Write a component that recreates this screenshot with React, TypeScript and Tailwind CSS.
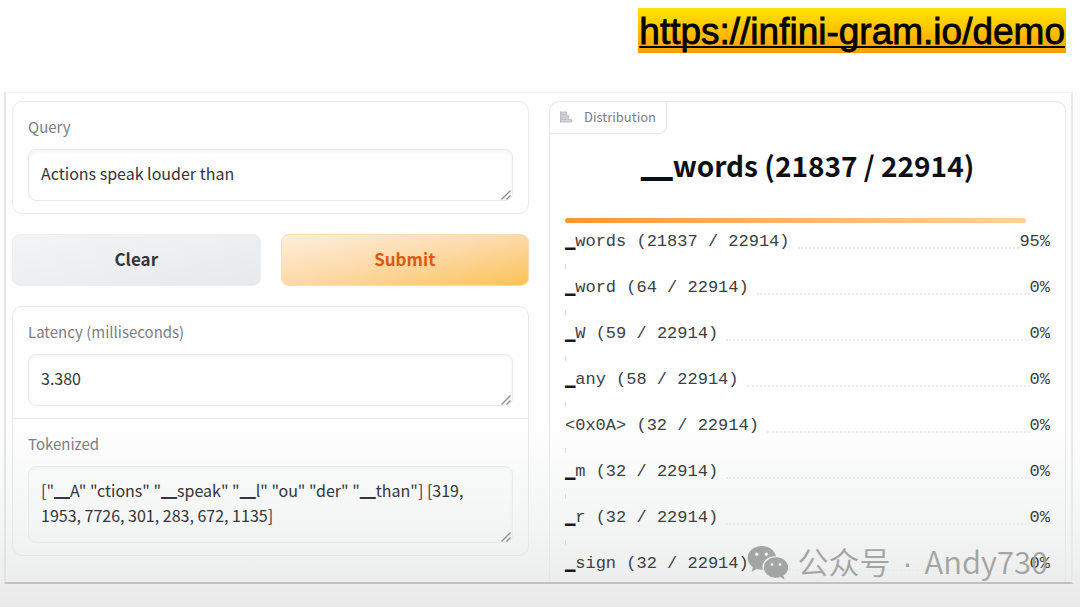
import React from "react";

type Row = { token: string; block?: boolean; count: number; percent: number };

const TOTAL = 22914;

const rows: Row[] = [
  { token: "words", block: true, count: 21837, percent: 95 },
  { token: "word", block: true, count: 64, percent: 0 },
  { token: "W", block: true, count: 59, percent: 0 },
  { token: "any", block: true, count: 58, percent: 0 },
  { token: "<0x0A>", count: 32, percent: 0 },
  { token: "m", block: true, count: 32, percent: 0 },
  { token: "r", block: true, count: 32, percent: 0 },
  { token: "sign", block: true, count: 32, percent: 0 },
];

function Grip() {
  return (
    <svg
      viewBox="0 0 10 10"
      className="pointer-events-none absolute right-[2px] bottom-[1px] h-[10px] w-[10px]"
      fill="none"
      stroke="#8d9092"
      strokeWidth="1.3"
      aria-hidden="true"
    >
      <path d="M0.500 9.500L9.500 0.500M5.500 9.500L9.500 5.500" />
    </svg>
  );
}

function Field({ id, label, value, lines = 1 }: { id: string; label: string; value: string; lines?: number }) {
  return (
    <div className="flex flex-col px-[15px] py-3">
      <label htmlFor={id} className="mb-[9px] text-[15px] leading-[26px] text-[#7b7f83]">
        {label}
      </label>
      <div className="relative">
        <textarea
          id={id}
          rows={lines}
          defaultValue={value}
          className="block w-full resize-none overflow-hidden rounded-lg border border-[#e9ebeb] px-3 pt-[11px] pb-[14px] text-base leading-[25px] text-[#30363b] shadow-[inset_0_2px_4px_rgba(0,0,0,0.04)] outline-none"
        />
        <Grip />
      </div>
    </div>
  );
}

function ChartIcon() {
  return (
    <svg viewBox="0 0 12 12" className="h-3 w-3" fill="#d3d5d6" stroke="#b4b7b9" strokeWidth="0.8" aria-hidden="true">
      <path d="M0.5 0.5v11" />
      <rect x="0.8" y="1" width="6" height="2.4" />
      <rect x="0.8" y="4.8" width="8" height="2.4" />
      <rect x="0.8" y="8.6" width="10.6" height="2.4" />
    </svg>
  );
}

function ChatLogo() {
  return (
    <svg viewBox="0 0 42 36" className="h-9 w-[42px]" aria-hidden="true">
      <path
        fill="#a3a4a4"
        d="M14.6 1C6.8 1 .6 6.2.6 12.8c0 3.800 2 7 5.200 9.200L4.600 26.800l5.200-2.700c1.600.400 3.200.600 4.800.600h1.300c-.300-.900-.400-1.800-.400-2.800 0-6.100 5.800-10.700 12.600-10.700h.900C27.800 5.300 21.900 1 14.600 1z"
      />
      <path
        fill="#a3a4a4"
        d="M41.200 22.400c0-5.700-5.600-10.200-12.100-10.200-6.900 0-12.200 4.600-12.200 10.200 0 5.700 5.300 10.300 12.200 10.300 1.400 0 2.900-.3 4.300-.7l4.100 2.400-1.100-3.800c2.900-2 4.800-4.900 4.800-8.200z"
      />
      <g fill="#f0f1f0">
        <circle cx="9.800" cy="9.300" r="1.700" />
        <circle cx="19.400" cy="9.300" r="1.700" />
        <circle cx="25" cy="19.400" r="1.400" />
        <circle cx="33" cy="19.400" r="1.400" />
      </g>
    </svg>
  );
}

export default function App() {
  return (
    <div className="relative min-h-screen bg-[linear-gradient(to_bottom,#fefefe_0%,#fefefe_70%,#f3f4f4_87%,#e8e9e8_100%)] pt-2 pr-[7px] pb-[25px] pl-1 font-['Noto_Sans_CJK_SC',sans-serif]">
      <header className="flex justify-end pr-[7px]">
        <a
          href="https://infini-gram.io/demo"
          className="bg-linear-to-b from-[#fee400] to-[#ff9d00] px-px pt-[2px] font-['Liberation_Sans',sans-serif] text-[37px] leading-[43px] text-black underline decoration-2 underline-offset-2 [-webkit-text-stroke:0.8px_black] [text-decoration-skip-ink:none]"
        >
          https://infini-gram.io/demo
        </a>
      </header>

      <main className="mt-[39px] grid grid-cols-2 gap-5 border-t border-r-2 border-b-2 border-l-2 border-t-[#f3f4f4] border-r-[#e8eaea] border-b-[#bfc1c1] border-l-[#e2e4e4] pr-[5px] pl-[6px]">
        <section className="flex flex-col pt-2">
          <div className="rounded-[10px] border border-[#eaecec]">
            <Field id="query" label="Query" value="Actions speak louder than" />
          </div>

          <div className="my-5 grid grid-cols-2 gap-5">
            <button
              type="button"
              className="h-[52px] rounded-lg border border-[#eceeef] bg-linear-to-br from-[#f3f4f5] to-[#e7e9eb] pb-[2px] text-[17px] font-bold text-[#30373e]"
            >
              Clear
            </button>
            <button
              type="button"
              className="h-[52px] rounded-lg border border-[#fbdcb4] bg-linear-to-br from-[#ffeedd] via-[#fdd9a6] to-[#fcc250] pb-[2px] text-[17px] font-bold text-[#dc5a10]"
            >
              Submit
            </button>
          </div>

          <div className="divide-y divide-[#eaecec] rounded-[10px] border border-[#e6e8e8]">
            <Field id="latency" label="Latency (milliseconds)" value="3.380" />
            <Field
              id="tokenized"
              label="Tokenized"
              lines={2}
              value={'["▁A" "ctions" "▁speak" "▁l" "ou" "der" "▁than"] [319, 1953, 7726, 301, 283, 672, 1135]'}
            />
          </div>
        </section>

        <section className="flex flex-col pt-2">
          <div className="grow rounded-t-[10px] border border-b-0 border-[#e6e8e8]">
            <div className="flex h-8 w-fit items-center gap-3 rounded-br-lg border-r border-b border-[#e6e8e8] pr-[10px] pb-[2px] pl-[10px] text-[13px] text-[#7b7f83]">
              <ChartIcon />
              Distribution
            </div>
            <h2 className="mt-[9px] mb-[31px] text-center text-[28px] leading-[44px] font-bold text-[#0c0f14]">
              <span className="text-[32px] leading-none">▁</span>words (21837 / {TOTAL})
            </h2>
            <ul className="flex flex-col gap-[10px] px-[15px] pb-[6px]">
              {rows.map((r) => (
                <li key={r.token}>
                  {r.percent > 0 ? (
                    <div
                      className="h-[5px] rounded-full bg-linear-to-r from-[#fb9627] to-[#fdd29b]"
                      style={{ width: `${r.percent}%` }}
                    />
                  ) : (
                    <div className="h-[5px] w-px bg-[#dcdedf]" />
                  )}
                  <div className="mt-[7px] flex font-['Liberation_Mono',monospace] text-[17px] leading-6 text-[#3b4045]">
                    <span className="whitespace-pre">
                      {r.block && <span className="text-[#17191b]">▁</span>}
                      {r.token} ({r.count} / {TOTAL})
                    </span>
                    <span className="mb-[5px] ml-2 grow self-end border-b-2 border-dotted border-[#eaecec]" />
                    <span>{r.percent}%</span>
                  </div>
                </li>
              ))}
            </ul>
          </div>
        </section>
      </main>

      <div className="pointer-events-none absolute right-8 bottom-[25px] flex items-center gap-2 text-[31px] leading-[40px] font-[350] text-[#a3a4a4]">
        <ChatLogo />
        <span>
          公众号 <span className="mx-[5px] font-['Liberation_Sans',sans-serif]">·</span> Andy730
        </span>
      </div>
    </div>
  );
}
